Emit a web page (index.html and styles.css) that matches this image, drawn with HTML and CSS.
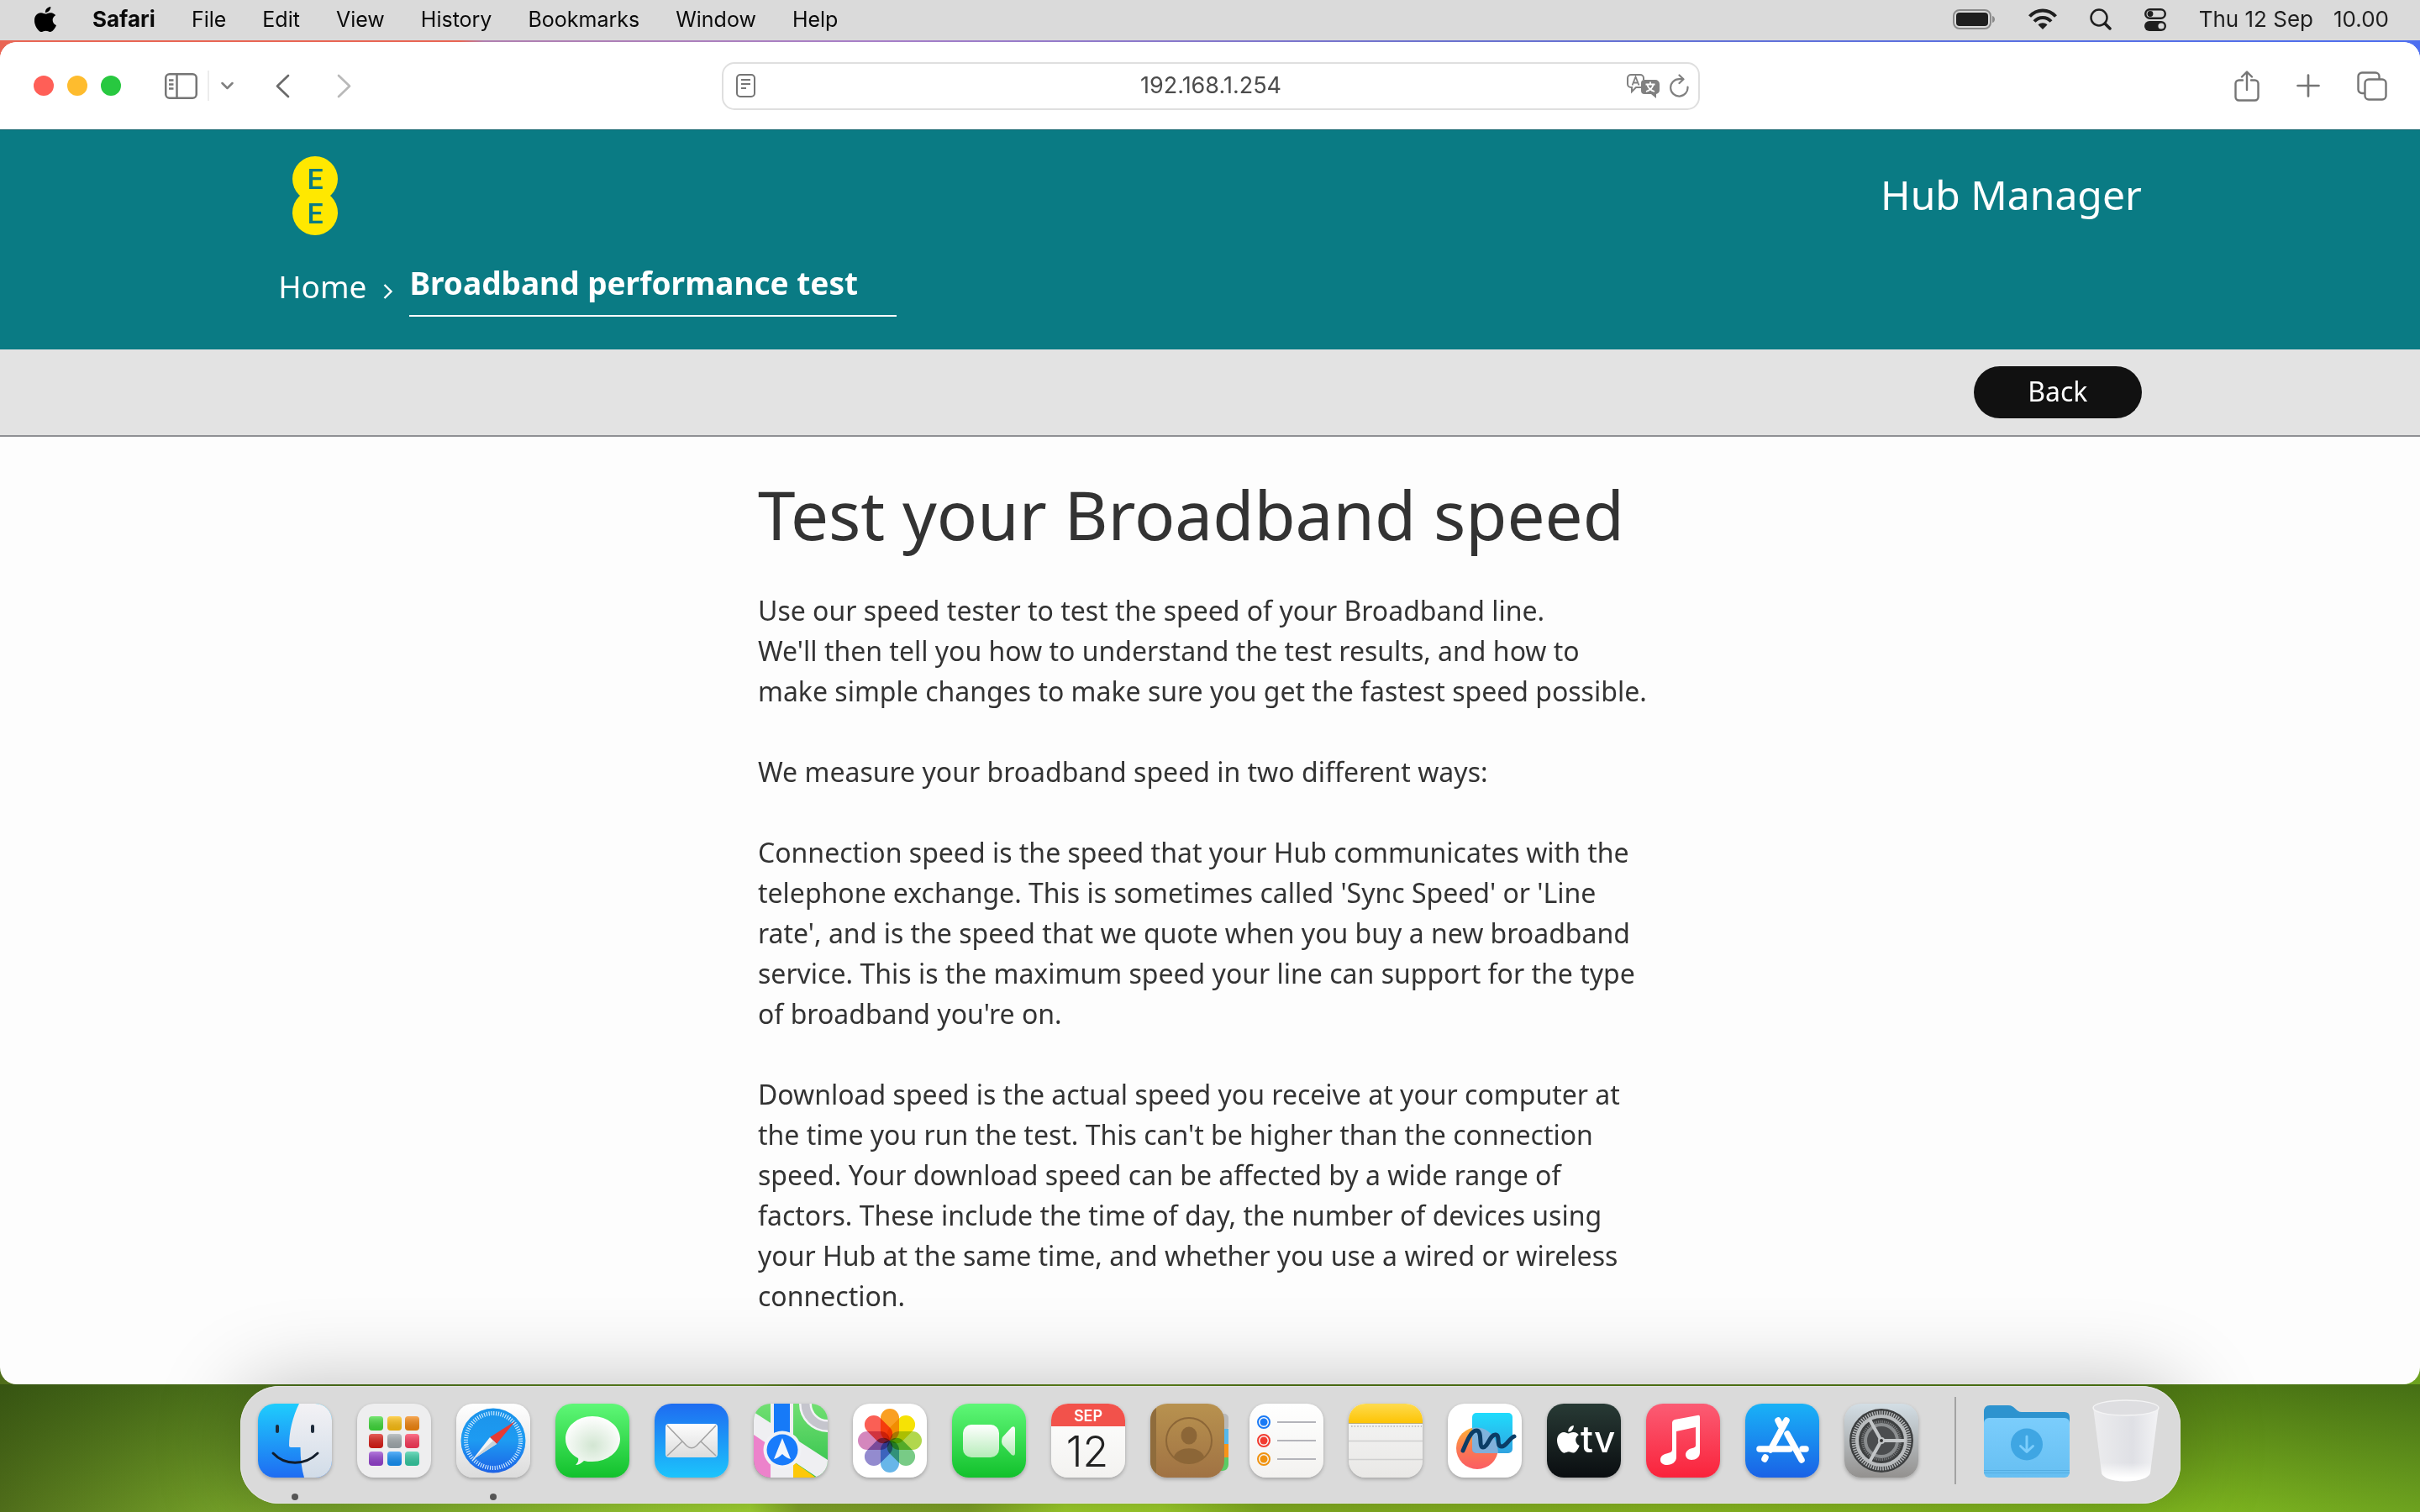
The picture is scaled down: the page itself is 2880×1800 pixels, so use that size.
FILE: index.html
```html
<!DOCTYPE html>
<html lang="en">
<head>
<meta charset="utf-8">
<meta name="viewport" content="width=device-width, initial-scale=1">
<title>Broadband performance test</title>
<link rel="stylesheet" href="styles.css">
</head>
<body>
<header class="menubar">
  <nav class="menubar-menus" aria-label="Application menus">
    <button class="menu" aria-label="Apple"><svg width="26" height="30" viewBox="2.3 0 19.5 24" preserveAspectRatio="none"><path id="apple" d="M12.152 6.896c-.948 0-2.415-1.078-3.96-1.04-2.04.027-3.91 1.183-4.961 3.014-2.117 3.675-.546 9.103 1.519 12.09 1.013 1.454 2.208 3.09 3.792 3.039 1.52-.065 2.09-.987 3.935-.987 1.831 0 2.35.987 3.96.948 1.637-.026 2.676-1.48 3.676-2.948 1.156-1.688 1.636-3.325 1.662-3.415-.039-.013-3.182-1.221-3.22-4.857-.026-3.04 2.48-4.494 2.597-4.559-1.429-2.09-3.623-2.324-4.39-2.376-2-.156-3.675 1.09-4.61 1.09zM15.53 3.83c.843-1.012 1.4-2.427 1.245-3.83-1.207.052-2.662.805-3.532 1.818-.78.896-1.454 2.338-1.273 3.714 1.338.104 2.715-.688 3.559-1.701"/></svg></button>
    <button class="menu menu-app">Safari</button>
    <button class="menu">File</button>
    <button class="menu">Edit</button>
    <button class="menu">View</button>
    <button class="menu">History</button>
    <button class="menu">Bookmarks</button>
    <button class="menu">Window</button>
    <button class="menu">Help</button>
  </nav>
  <div class="menubar-status">
    <svg width="51" height="24" viewBox="0 0 51 24" role="img" aria-label="Battery"><rect x="1" y="1" width="44" height="22" rx="7" fill="none" stroke="#8a8a8a" stroke-width="2"/><rect x="4" y="4" width="38" height="16" rx="4" fill="#1f1f1f"/><path d="M47 8c4 1 4 7 0 8z" fill="#8a8a8a"/></svg>
    <svg width="34" height="26" viewBox="0 0 34 26" role="img" aria-label="Wi-Fi" fill="none" stroke="#1f1f1f" stroke-width="4"><path d="M1.500 9.500C10 0 24 0 32.500 9.500"/><path d="M7 15.500c5.500-6 14.500-6 20 0"/><path d="M17 25l-5.500-5.500c3-3 8-3 11 0z" fill="#1f1f1f" stroke="none"/></svg>
    <svg width="26" height="26" viewBox="0 0 26 26" role="img" aria-label="Search" fill="none" stroke="#1f1f1f" stroke-linecap="round"><circle cx="11" cy="11" r="9.500" stroke-width="2.500"/><path d="M18 18l6 6" stroke-width="3.500"/></svg>
    <svg width="26" height="27" viewBox="0 0 26 27" role="img" aria-label="Control Centre"><rect x="1.250" y="1.250" width="23.500" height="10.500" rx="5.250" fill="none" stroke="#1f1f1f" stroke-width="2.500"/><circle cx="7" cy="6.500" r="3.400" fill="#1f1f1f"/><rect y="15" width="26" height="12" rx="6" fill="#1f1f1f"/><circle cx="20" cy="21" r="3.600" fill="#dadada"/></svg>
    <time class="clock"><span>Thu 12 Sep</span><span>10.00</span></time>
  </div>
</header>

<div class="desktop">
  <main class="window">
    <div class="toolbar">
      <div class="toolbar-left">
        <div class="lights">
          <button class="light light-close" aria-label="Close"></button>
          <button class="light light-min" aria-label="Minimise"></button>
          <button class="light light-zoom" aria-label="Zoom"></button>
        </div>
        <button class="tool tool-sidebar" aria-label="Sidebar"><svg width="39" height="31" viewBox="0 0 39 31" fill="none" stroke="#757575" stroke-width="2.500"><rect x="1.250" y="1.250" width="36.500" height="28.500" rx="4.500"/><path d="M14.500 1v29M5 8.500h5.500M5 13.500h5.500M5 18.500h5.500"/></svg></button>
        <span class="tool-divider"></span>
        <button class="tool tool-groups" aria-label="Tab groups"><svg width="15" height="10" viewBox="0 0 15 10" fill="none" stroke="#808080" stroke-width="2.500" stroke-linecap="round" stroke-linejoin="round"><path d="M1.500 2l6 6 6-6"/></svg></button>
        <button class="tool tool-back" aria-label="Go back"><svg width="17" height="29" viewBox="0 0 17 29" fill="none" stroke="#6b6b6b" stroke-width="2.700" stroke-linecap="round" stroke-linejoin="round"><path d="M15 2L2 14.500 15 27"/></svg></button>
        <button class="tool" aria-label="Go forward"><svg width="17" height="29" viewBox="0 0 17 29" fill="none" stroke="#b9b9b9" stroke-width="2.700" stroke-linecap="round" stroke-linejoin="round"><path d="M2 2l13 12.500L2 27"/></svg></button>
      </div>
      <div class="address">
        <button class="tool" aria-label="Reader"><svg width="23" height="28" viewBox="0 0 23 28" fill="none" stroke="#757575" stroke-width="2"><rect x="1" y="1" width="21" height="26" rx="4"/><path d="M6 7h11M6 12h11M6 17h6"/></svg></button>
        <input class="address-field" type="text" value="192.168.1.254" aria-label="Address">
        <button class="tool" aria-label="Translate"><svg width="39" height="29" viewBox="0 0 39 29"><path d="M17 16H11l-5 5v-5H5a4 4 0 0 1-4-4V5a4 4 0 0 1 4-4h11a4 4 0 0 1 4 4v2" fill="none" stroke="#808080" stroke-width="2"/><path d="M6.500 13.500l4-10 4 10M8 10.500h5" fill="none" stroke="#808080" stroke-width="1.800"/><path d="M21 7h13a5 5 0 0 1 5 5v7a5 5 0 0 1-4 5v5l-6-5h-8a4 4 0 0 1-4-4v-9a4 4 0 0 1 4-4z" fill="#808080"/><path d="M22.500 12.500h11M28 9.500v3M31.500 13c-1 4-4 6.500-8.500 8M24.500 13c1 4 4 6.500 8.500 8" fill="none" stroke="#fff" stroke-width="1.800"/></svg></button>
        <button class="tool" aria-label="Reload"><svg width="23" height="28" viewBox="0 0 23 28" fill="none" stroke="#808080" stroke-width="2.200" stroke-linecap="round" stroke-linejoin="round"><path d="M21.500 15.500A10.200 10.200 0 1 1 11.300 6.200h4.500"/><path d="M11.500 1.500l5 4.700-5 4.800"/></svg></button>
      </div>
      <div class="toolbar-right">
        <button class="tool" aria-label="Share"><svg width="30" height="37" viewBox="0 0 30 37" fill="none" stroke="#757575" stroke-width="2.400" stroke-linecap="round" stroke-linejoin="round"><path d="M10 11.500H5.500a4 4 0 0 0-4 4V31.500a4 4 0 0 0 4 4h19a4 4 0 0 0 4-4v-16a4 4 0 0 0-4-4H20M15 23V2M9 7.500L15 1.500l6 6"/></svg></button>
        <button class="tool" aria-label="New tab"><svg width="28" height="28" viewBox="0 0 28 28" fill="none" stroke="#757575" stroke-width="2.700" stroke-linecap="round"><path d="M14 1.500v25M1.500 14h25"/></svg></button>
        <button class="tool" aria-label="Tab overview"><svg width="36" height="35" viewBox="0 0 36 35" fill="none" stroke="#757575" stroke-width="2.400"><rect x="9.500" y="9.500" width="25" height="24" rx="4.500"/><path d="M9 26H6a4.500 4.500 0 0 1-4.500-4.500V6A4.500 4.500 0 0 1 6 1.500h16A4.500 4.500 0 0 1 26.500 6v3"/></svg></button>
      </div>
    </div>

    <section class="banner">
      <div class="banner-inner">
        <div class="brand-row">
          <svg class="logo" width="54" height="94" viewBox="0 0 54 94" role="img" aria-label="EE"><circle cx="27" cy="27" r="27" fill="#ffe800"/><circle cx="27" cy="67" r="27" fill="#ffe800"/><g class="logo-text"><text x="27" y="39" text-anchor="middle">E</text><text x="27" y="80" text-anchor="middle">E</text></g></svg>
          <p class="product">Hub Manager</p>
        </div>
        <nav class="crumbs" aria-label="Breadcrumb">
          <a class="crumb" href="#home">Home</a>
          <svg class="crumb-arrow" width="12" height="18" viewBox="0 0 12 18" fill="none" stroke="#fff" stroke-width="2.400"><path d="M1.500 1l8 8-8 8"/></svg>
          <a class="crumb crumb-current" href="#test" aria-current="page">Broadband performance test</a>
        </nav>
      </div>
    </section>
    <div class="actions">
      <div class="actions-inner"><button class="back">Back</button></div>
    </div>

    <article class="content">
      <h1>Test your Broadband speed</h1>
      <p>Use our speed tester to test the speed of your Broadband line.<br>We'll then tell you how to understand the test results, and how to<br>make simple changes to make sure you get the fastest speed possible.</p>
      <p>We measure your broadband speed in two different ways:</p>
      <p>Connection speed is the speed that your Hub communicates with the telephone exchange. This is sometimes called 'Sync Speed' or 'Line rate', and is the speed that we quote when you buy a new broadband service. This is the maximum speed your line can support for the type of broadband you're on.</p>
      <p>Download speed is the actual speed you receive at your computer at the time you run the test. This can't be higher than the connection speed. Your download speed can be affected by a wide range of factors. These include the time of day, the number of devices using your Hub at the same time, and whether you use a wired or wireless connection.</p>
    </article>
  </main>

  <nav class="dock" aria-label="Dock">
    <button class="app app-running" aria-label="Finder"><svg viewBox="0 0 88 88">
      <defs><linearGradient id="fb" x1="0" y1="0" x2="0" y2="1"><stop offset="0" stop-color="#1fcdfd"/><stop offset="1" stop-color="#1e6cf2"/></linearGradient><linearGradient id="fw" x1="0" y1="0" x2="0" y2="1"><stop offset="0" stop-color="#f3f2f5"/><stop offset="1" stop-color="#d1dce8"/></linearGradient></defs>
      <path fill="url(#fb)" d="M0 0h88v88H0z"/><path fill="url(#fw)" d="M49 0C41 16 37 34 37 50q0 2 2 2h11.500C50.500 66 52 78 55 88h33V0z"/>
      <path d="M23 27v6M65 27v6" stroke="#1d2b3a" stroke-width="4" stroke-linecap="round"/><path d="M18 59c14 15 38 15 53 0" fill="none" stroke="#111c2a" stroke-width="3" stroke-linecap="round"/></svg></button>

    <button class="app app-launchpad" aria-label="Launchpad"><svg viewBox="0 0 88 88">
      <defs><linearGradient id="sh" x1="0" y1="0" x2="0" y2="1"><stop offset="0" stop-color="#fff" stop-opacity=".3"/><stop offset="1" stop-color="#000" stop-opacity=".12"/></linearGradient></defs>
      <g><rect x="14" y="15" width="17" height="17" rx="4" fill="#3fdc3a"/><rect x="36" y="15" width="17" height="17" rx="4" fill="#ffc010"/><rect x="57" y="15" width="17" height="17" rx="4" fill="#f5850c"/><rect x="14" y="36" width="17" height="17" rx="4" fill="#db1a14"/><rect x="36" y="36" width="17" height="17" rx="4" fill="#a2aaae"/><rect x="57" y="36" width="17" height="17" rx="4" fill="#fd385a"/><rect x="14" y="57" width="17" height="17" rx="4" fill="#9440cf"/><rect x="36" y="57" width="17" height="17" rx="4" fill="#1491f8"/><rect x="57" y="57" width="17" height="17" rx="4" fill="#34cca2"/></g>
      <g fill="url(#sh)"><rect x="14" y="15" width="17" height="17" rx="4"/><rect x="36" y="15" width="17" height="17" rx="4"/><rect x="57" y="15" width="17" height="17" rx="4"/><rect x="14" y="36" width="17" height="17" rx="4"/><rect x="36" y="36" width="17" height="17" rx="4"/><rect x="57" y="36" width="17" height="17" rx="4"/><rect x="14" y="57" width="17" height="17" rx="4"/><rect x="36" y="57" width="17" height="17" rx="4"/><rect x="57" y="57" width="17" height="17" rx="4"/></g></svg></button>

    <button class="app app-safari app-running" aria-label="Safari"><svg viewBox="0 0 88 88">
      <defs><linearGradient id="sf" x1="0" y1="0" x2="0" y2="1"><stop offset="0" stop-color="#1b93ea"/><stop offset=".5" stop-color="#1d9bf2"/><stop offset="1" stop-color="#1d62e6"/></linearGradient></defs>
      <circle cx="44" cy="44" r="38.500" fill="url(#sf)"/><circle cx="44" cy="44" r="32.500" fill="none" stroke="#d9efff" stroke-width="5" stroke-dasharray="1.100 1.736"/>
      <path d="M70 21L48 48l-8-8z" fill="#e63a34"/><path d="M19 67l21-27 8 8z" fill="#f4f4f4"/><path d="M19 67l25-23 4 4z" fill="#c9d2d8"/></svg></button>

    <button class="app app-green" aria-label="Messages"><svg viewBox="0 0 88 88">
      <defs><radialGradient id="mg" cx=".5" cy=".6" r=".6"><stop offset="0" stop-color="#d2e6d2"/><stop offset="1" stop-color="#fff"/></radialGradient></defs>
      <path fill="url(#mg)" d="M44 15c18 0 33 12 33 27S62 69 44 69c-4 0-7 0-10-1-3 3-7 5-10 5 2-2 4-5 3-8-9-5-15-13-15-23 0-15 14-27 32-27z"/></svg></button>

    <button class="app app-mail" aria-label="Mail"><svg viewBox="0 0 88 88">
      <defs><linearGradient id="ml" x1="0" y1="0" x2="0" y2="1"><stop offset="0" stop-color="#fdfdfd"/><stop offset="1" stop-color="#dcdcdc"/></linearGradient></defs>
      <rect x="13" y="24" width="62" height="40" rx="4" fill="url(#ml)"/><path d="M15 62l18-17M73 62L55 45M15 26l23 24q6 5.500 12 0l23-24" fill="none" stroke="#a3a3a3" stroke-width="1.600"/></svg></button>

    <button class="app" aria-label="Maps"><svg viewBox="0 0 88 88">
      <defs><linearGradient id="mp" x1="0" y1="0" x2="0" y2="1"><stop offset="0" stop-color="#71df72"/><stop offset="1" stop-color="#2fc14a"/></linearGradient></defs>
      <path fill="url(#mp)" d="M0 0h88v88H0z"/><path d="M0 36l20 14v38H0z" fill="#ec82cb"/>
      <path d="M0 10l88 57v21H76L0 37z" fill="#efeff2"/><path d="M46 68l28 20H46z" fill="#fdc80a"/><path d="M20 0h27v88H20z" fill="#efeff2"/><path d="M24 0h19v44H24z" fill="#167af8"/>
      <circle cx="88" cy="0" r="26.500" fill="none" stroke="#f3f3f6" stroke-width="15"/><circle cx="88" cy="0" r="26.500" fill="none" stroke="#c5c5cd" stroke-width="10"/>
      <circle cx="34" cy="55" r="22.500" fill="#f1f2f5"/><circle cx="34" cy="55" r="18.500" fill="#187bfb"/><path d="M34 41l10 25q-5-1-10-6-5 5-10 6z" fill="#f2f6fc"/></svg></button>

    <button class="app app-white" aria-label="Photos"><svg viewBox="0 0 88 88"><g class="petals">
      <rect x="33" y="6" width="22" height="38" rx="11" fill="#fa9f22"/><rect x="33" y="6" width="22" height="38" rx="11" fill="#f6e205" transform="rotate(45 44 44)"/><rect x="33" y="6" width="22" height="38" rx="11" fill="#b1d74d" transform="rotate(90 44 44)"/><rect x="33" y="6" width="22" height="38" rx="11" fill="#78cb86" transform="rotate(135 44 44)"/><rect x="33" y="6" width="22" height="38" rx="11" fill="#67b6e9" transform="rotate(180 44 44)"/><rect x="33" y="6" width="22" height="38" rx="11" fill="#938bcf" transform="rotate(225 44 44)"/><rect x="33" y="6" width="22" height="38" rx="11" fill="#d487bd" transform="rotate(270 44 44)"/><rect x="33" y="6" width="22" height="38" rx="11" fill="#fa5f55" transform="rotate(315 44 44)"/></g></svg></button>

    <button class="app app-green" aria-label="FaceTime"><svg viewBox="0 0 88 88">
      <defs><linearGradient id="ft" x1="0" y1="0" x2="0" y2="1"><stop offset="0" stop-color="#fff"/><stop offset="1" stop-color="#b6ecb9"/></linearGradient></defs>
      <rect x="13" y="25" width="43" height="39" rx="10" fill="url(#ft)"/><path d="M60 40l11-12q4-2 4 2v29q0 4-4 2L60 49q-2-4 0-9z" fill="url(#ft)"/></svg></button>

    <button class="app app-calendar" aria-label="Calendar"><svg viewBox="0 0 88 88"><path d="M0 0h88v27H0z" fill="#f2524b"/><text class="cal-month" x="44" y="21" text-anchor="middle">SEP</text><text class="cal-day" x="43" y="75" text-anchor="middle">12</text></svg></button>

    <button class="app app-contacts" aria-label="Contacts"><svg viewBox="0 0 88 88">
      <defs><linearGradient id="ct" x1="0" y1="0" x2="0" y2="1"><stop offset="0" stop-color="#b8924f"/><stop offset="1" stop-color="#a07243"/></linearGradient></defs>
      <rect x="78" y="12" width="15" height="20" rx="5" fill="#b9b9b9"/><path d="M80 30h13v18H80z" fill="#55b8ec"/><path d="M80 48h13v16H80z" fill="#f79418"/><path d="M80 64h13v8q0 7-7 8h-6z" fill="#5acb64"/>
      <rect width="88" height="88" rx="20" fill="url(#ct)"/><path d="M7 5v78Q0 78 0 68V20Q0 10 7 5z" fill="#8f6c3c"/>
      <circle cx="46" cy="44" r="27" fill="none" stroke="#8c6637" stroke-width="2"/><ellipse cx="46" cy="38" rx="9.500" ry="10.500" fill="#8c6637"/><path d="M28 63c5-13 31-13 36 0-10 11-26 11-36 0z" fill="#8c6637"/></svg></button>

    <button class="app app-paper" aria-label="Reminders"><svg viewBox="0 0 88 88"><g fill="none" stroke-width="2"><circle cx="17" cy="22" r="7" stroke="#1a7af5"/><circle cx="17" cy="44" r="7" stroke="#f23b30"/><circle cx="17" cy="66" r="7" stroke="#f0920f"/></g><circle cx="17" cy="22" r="4.500" fill="#1a7af5"/><circle cx="17" cy="44" r="4.500" fill="#f23b30"/><circle cx="17" cy="66" r="4.500" fill="#f0920f"/><path d="M33 22h46M33 44h46M33 66h46" stroke="#b4b4ba" stroke-width="2"/></svg></button>

    <button class="app app-paper" aria-label="Notes"><svg viewBox="0 0 88 88">
      <defs><linearGradient id="nt" x1="0" y1="0" x2="0" y2="1"><stop offset="0" stop-color="#fedb4f"/><stop offset="1" stop-color="#fdc404"/></linearGradient></defs>
      <path d="M0 23h88v65H0z" fill="#000" fill-opacity=".04"/><path d="M0 0h88v23H0z" fill="url(#nt)"/><path d="M0 23.500h88" stroke="#b9aa77"/><path d="M3 27h84" stroke="#b5b5b5" stroke-width="1.600" stroke-dasharray="1.600 2"/><path d="M0 44.500h88M0 66.500h88" stroke="#cfcfcf" stroke-width="1.500"/></svg></button>

    <button class="app app-white" aria-label="Freeform"><svg viewBox="0 0 88 88">
      <defs><linearGradient id="f1" x1="0" y1="0" x2="0" y2="1"><stop offset="0" stop-color="#feb236"/><stop offset=".5" stop-color="#fb7a52"/><stop offset="1" stop-color="#fb5d63"/></linearGradient><linearGradient id="f2" x1="0" y1="0" x2="0" y2="1"><stop offset="0" stop-color="#1fdcfd"/><stop offset="1" stop-color="#30a3e0"/></linearGradient></defs>
      <circle cx="35" cy="53" r="25" fill="url(#f1)"/><rect x="29" y="11" width="48" height="48" rx="5" fill="url(#f2)"/><path d="M29 29c16-3 30 8 31 30H34a5 5 0 0 1-5-5z" fill="#8fb0d8" fill-opacity=".85"/>
      <path d="M18 56c4-9 9-24 16-24 8 0 2 20 8 20s8-16 15-15c6 1 0 14 7 14 6 0 8-9 15-12" fill="none" stroke="#0b3d66" stroke-width="5" stroke-linecap="round" stroke-linejoin="round"/></svg></button>

    <button class="app app-tv" aria-label="TV"><svg viewBox="0 0 88 88"><path transform="translate(9 26) scale(1.360)" fill="#fff" d="M12.152 6.896c-.948 0-2.415-1.078-3.960-1.040-2.040.027-3.910 1.183-4.961 3.014-2.117 3.675-.546 9.103 1.519 12.090 1.013 1.454 2.208 3.090 3.792 3.039 1.520-.065 2.090-.987 3.935-.987 1.831 0 2.350.987 3.960.948 1.637-.026 2.676-1.480 3.676-2.948 1.156-1.688 1.636-3.325 1.662-3.415-.039-.013-3.182-1.221-3.220-4.857-.026-3.040 2.480-4.494 2.597-4.559-1.429-2.090-3.623-2.324-4.390-2.376-2-.156-3.675 1.090-4.610 1.090zM15.530 3.830c.843-1.012 1.400-2.427 1.245-3.830-1.207.052-2.662.805-3.532 1.818-.780.896-1.454 2.338-1.273 3.714 1.338.104 2.715-.688 3.559-1.701"/><text class="tv-text" x="40" y="58">tv</text></svg></button>

    <button class="app app-music" aria-label="Music"><svg viewBox="0 0 88 88"><path d="M31 23q0-3 3-4l27-5q3-1 3 2v42c0 6-5 9-10 9-4 0-7-3-7-6 0-4 3-7 8-8 3-1 4-1 4-4V28l-23 5v31c0 5-5 9-11 9-4 0-8-2-8-6 0-5 4-7 9-8 4-1 5-2 5-5z" fill="#fff"/></svg></button>

    <button class="app app-store" aria-label="App Store"><svg viewBox="0 0 88 88" fill="none" stroke="#fff" stroke-width="7.500" stroke-linecap="round"><path d="M39 20l3 6M49 20L30 55M17 54h36M68 54h4M23 66l1-2"/><path d="M50 36l17 31"/></svg></button>

    <button class="app app-settings" aria-label="System Settings"><svg viewBox="0 0 88 88">
      <circle cx="44" cy="44" r="38" fill="#3d3f40"/><circle cx="44" cy="44" r="33" fill="none" stroke="#b6b9bb" stroke-width="5" stroke-dasharray="1.500 1.380"/><circle cx="44" cy="44" r="29" fill="none" stroke="#b9bcbe" stroke-width="4"/><circle cx="44" cy="44" r="22.500" fill="none" stroke="#77797b" stroke-width="3" stroke-dasharray="1.200 1.156"/><circle cx="44" cy="44" r="19" fill="#4b4d4f" stroke="#8b8e90" stroke-width="4"/>
      <path d="M44 44h29M44 44L30 19M44 44L30 69" stroke="#c3c6c8" stroke-width="4"/><circle cx="44" cy="44" r="4" fill="#c3c6c8"/><circle cx="44" cy="44" r="2" fill="#333"/></svg></button>

    <span class="dock-divider"></span>

    <div class="dock-places">
      <button aria-label="Downloads"><svg width="102" height="88" viewBox="0 0 102 88">
        <defs><linearGradient id="dl" x1="0" y1="0" x2="0" y2="1"><stop offset="0" stop-color="#7bcdfc"/><stop offset="1" stop-color="#66bff2"/></linearGradient></defs>
        <path d="M0 10Q0 2 7 2h22c8 0 9 8 16 8h51q6 0 6 6v20H0z" fill="#2d93cf"/><rect y="17" width="102" height="71" rx="6" fill="url(#dl)"/><path d="M0 79.500h102M0 82.500h102" stroke="#54ade2"/><circle cx="51" cy="48.500" r="19" fill="#3fa6e3"/><path d="M51 39v18M43.500 50.500l7.500 7 7.500-7" fill="none" stroke="#7bcdfc" stroke-width="3" stroke-linecap="round" stroke-linejoin="round"/></svg></button>
      <button aria-label="Bin"><svg width="80" height="98" viewBox="0 0 80 98">
        <defs><linearGradient id="bn" x1="0" y1="0" x2="1" y2="0"><stop offset="0" stop-color="#ececee"/><stop offset=".6" stop-color="#dfe0e5"/><stop offset="1" stop-color="#f3f3f5"/></linearGradient><linearGradient id="bs" x1="0" y1="0" x2="0" y2="1"><stop offset=".75" stop-color="#fff" stop-opacity="0"/><stop offset=".95" stop-color="#fff"/></linearGradient></defs>
        <path d="M1 9l10 78c2 14 56 14 58 0L79 9z" fill="url(#bn)"/><path d="M1 9l10 78c2 14 56 14 58 0L79 9z" fill="url(#bs)"/><ellipse cx="40" cy="10" rx="39" ry="9" fill="#dedee1" stroke="#f4f4f5" stroke-width="1.500"/></svg></button>
    </div>
  </nav>
</div>
</body>
</html>
```
FILE: styles.css
```css
* { box-sizing: border-box; }

body {
  margin: 0;
  min-height: 100vh;
  display: flex;
  flex-direction: column;
  font-family: "Noto Sans", sans-serif;
  color: #333;
}

button {
  margin: 0;
  padding: 0;
  border: 0;
  background: none;
  color: inherit;
  font: inherit;
}

svg { display: block; }

/* Menu bar */
.menubar {
  height: 48px;
  display: flex;
  align-items: center;
  justify-content: space-between;
  padding: 0 37px 2px 41px;
  background: #dadada;
  color: #0a0a0a;
  font: 25px/32px Inter, sans-serif;
}
.menubar-menus { display: flex; align-items: center; gap: 43px; }
.menu-app { font-size: 26px; font-weight: 700; }
.menubar-status { display: flex; align-items: center; gap: 39px; }
.clock { display: flex; gap: 24px; font-size: 26px; color: #1f1f1f; }

/* Desktop */
.desktop {
  flex: 1;
  display: flex;
  flex-direction: column;
  gap: 2px;
  padding: 2px 0 10px;
  background:
    linear-gradient(to right, #e96554 0, #e96554 19%, #b07fb0 20%, #a87fc8 36%, #6a72cf 60%, #4d6ef0 100%) top / 100% 60px no-repeat,
    linear-gradient(to bottom, rgba(30, 60, 10, 0.5), rgba(40, 60, 10, 0)) bottom / 100% 152px no-repeat,
    linear-gradient(to right, #4f6d1a 0, #74a028 9%, #86b52f 17%, #a8dc35 31%, #88ac2a 33%, #84a829 40%, #a4d62e 44%, #a4d62e 48%, #88b422 52%, #8fc022 72%, #80b81f 90%, #6da21f 100%);
}

/* Browser window */
.window {
  flex: 1;
  overflow: hidden;
  border-radius: 20px;
  background: #fdfdfd;
}
.toolbar {
  display: grid;
  grid-template-columns: 1fr 1164px 1fr;
  align-items: center;
  height: 104px;
  padding: 0 39px 0 40px;
  background: #fff;
}
.toolbar-left, .toolbar-right { display: flex; align-items: center; }
.toolbar-right { justify-content: flex-end; gap: 44px; }
.lights { display: flex; gap: 16px; }
.light { width: 24px; height: 24px; border-radius: 50%; }
.light-close { background: #ff5f57; }
.light-min { background: #febc2e; }
.light-zoom { background: #28c840; }
.tool-sidebar { margin-left: 52px; }
.tool-divider { width: 2px; height: 36px; margin: 0 14px 0 12px; background: #ececec; }
.tool-back { margin: 0 56px 0 50px; }
.address {
  display: flex;
  align-items: center;
  gap: 12px;
  height: 57px;
  padding: 0 11px 0 15px;
  border: 2px solid #dfdfdf;
  border-radius: 15px;
}
.address-field {
  flex: 1;
  min-width: 0;
  padding: 0 0 0 48px;
  border: 0;
  background: none;
  color: #4c4c4c;
  text-align: center;
  font: 27px/36px Inter, sans-serif;
}

/* Page banner */
.banner { background: #0a7b84; border-top: 1px solid #0a5f68; color: #fff; }
.banner-inner { width: 77%; margin: 0 auto; padding: 31px 0 39px; }
.brand-row { display: flex; align-items: flex-start; justify-content: space-between; }
.logo { margin-left: 17px; }
.logo-text { fill: #0a7b84; font: 500 34px Roboto, sans-serif; }
.product { margin: 14px 0 0; font-size: 48px; line-height: 64px; }
.crumbs { display: flex; align-items: flex-start; margin-top: 32px; }
.crumb { padding-top: 4px; color: #fff; font-size: 37px; line-height: 50px; text-decoration: none; }
.crumb-arrow { margin: 26px 19px 0 20px; }
.crumb-current {
  padding: 0 46px 13px 0;
  border-bottom: 2px solid #fff;
  font-weight: 700;
}

/* Action bar */
.actions { background: #e3e3e3; border-bottom: 2px solid #8f9094; }
.actions-inner { width: 77%; margin: 0 auto; padding: 20px 0; display: flex; justify-content: flex-end; }
.back {
  width: 200px;
  height: 62px;
  padding-bottom: 2px;
  border-radius: 31px;
  background: #111;
  color: #fff;
  font-size: 32px;
  line-height: 60px;
}

/* Article */
.content { max-width: 1076px; margin: 0 auto; padding: 44px 0; font-size: 32px; line-height: 48px; }
.content h1 { margin: 0 0 43px; font-size: 80px; line-height: 96px; font-weight: 400; }
.content p { margin: 0 0 48px; }
.content p:last-child { margin-bottom: 0; }

/* Dock */
.dock {
  align-self: center;
  display: flex;
  align-items: center;
  gap: 30px;
  height: 140px;
  padding: 0 25px 10px 21px;
  border-radius: 46px;
  background: #dadada;
  box-shadow: 0 0 100px rgba(0, 0, 0, 0.26), inset 0 0 0 1px #e4e4e4;
}
.app {
  position: relative;
  width: 88px;
  height: 88px;
  border-radius: 20px;
  box-shadow: 0 2px 4px rgba(0, 0, 0, 0.25);
}
.app svg { width: 88px; height: 88px; border-radius: 20px; }
.app-running::after {
  content: "";
  position: absolute;
  left: 40px;
  top: 107px;
  width: 8px;
  height: 8px;
  border-radius: 50%;
  background: #555;
}
.app-launchpad { background: #eeeeef; }
.app-safari { background: linear-gradient(#fff, #dcdcdc); }
.app-green { background: linear-gradient(#5ff777, #12c12c); }
.app-mail { background: linear-gradient(#1e6cf1, #1cc4fc); }
.app-white { background: #fff; }
.app-calendar, .app-paper { background: linear-gradient(#fff, #f3f2f0); }
.app-contacts svg { overflow: visible; }
.app-tv { background: linear-gradient(#283a35, #0a0d10); }
.app-music { background: linear-gradient(#fb5c74, #fa233b); }
.app-store { background: linear-gradient(#19b2f7, #1a62e6); }
.app-settings { background: linear-gradient(#d3dee5, #93918f); }
.petals rect { mix-blend-mode: multiply; }
.cal-month { fill: #fff; font: 600 18px Inter, sans-serif; }
.cal-day { fill: #222; font: 300 50px Inter, sans-serif; }
.tv-text { fill: #fff; font: 500 44px Inter, sans-serif; }
.dock-divider { width: 2px; height: 104px; margin: 0 3px 0 13px; background: #a3a3a3; }
.dock-places { display: flex; align-items: center; gap: 27px; }
```
